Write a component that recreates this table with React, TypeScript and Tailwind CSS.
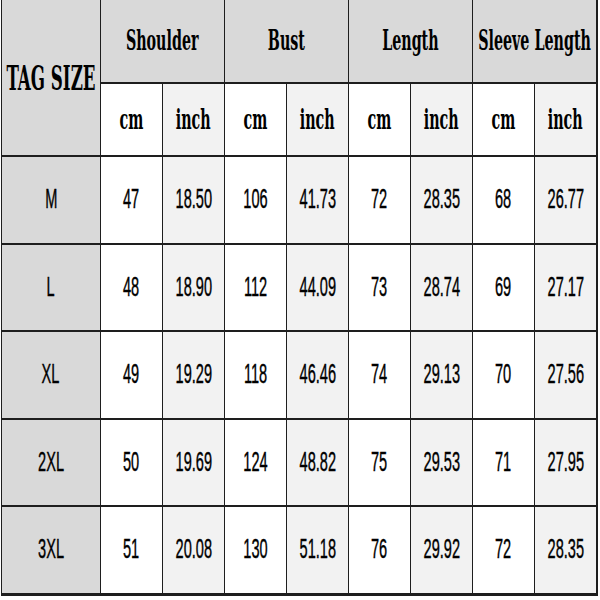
import React from "react";

type Row = { size: string; values: string[] };

const groups = ["Shoulder", "Bust", "Length", "Sleeve Length"];

const rows: Row[] = [
  { size: "M", values: ["47", "18.50", "106", "41.73", "72", "28.35", "68", "26.77"] },
  { size: "L", values: ["48", "18.90", "112", "44.09", "73", "28.74", "69", "27.17"] },
  { size: "XL", values: ["49", "19.29", "118", "46.46", "74", "29.13", "70", "27.56"] },
  { size: "2XL", values: ["50", "19.69", "124", "48.82", "75", "29.53", "71", "27.95"] },
  { size: "3XL", values: ["51", "20.08", "130", "51.18", "76", "29.92", "72", "28.35"] },
];

const headFont = "font-['DejaVu_Serif',serif] font-bold text-black";
const dataFont = "font-['Liberation_Sans',Arial,sans-serif] text-[27px] text-black [-webkit-text-stroke:0.4px_#000]";

function Head({ children, className = "" }: { children: React.ReactNode; className?: string }) {
  return (
    <div className={`flex items-center justify-center overflow-visible ${className}`}>
      <span className={`inline-block whitespace-nowrap text-[28px] leading-none scale-x-[0.51] ${headFont}`}>
        {children}
      </span>
    </div>
  );
}

function Cell({ children, className = "" }: { children: React.ReactNode; className?: string }) {
  return (
    <div className={`flex items-center justify-center ${className}`}>
      <span className={`inline-block whitespace-nowrap leading-none scale-x-[0.54] ${dataFont}`}>
        {children}
      </span>
    </div>
  );
}

export default function App() {
  return (
    <div className="w-[600px] h-[600px] bg-white overflow-hidden">
      <div className="ml-px inline-grid grid-cols-[98px_repeat(8,61px)] grid-rows-[82px_71px_repeat(5,85.5px)] gap-x-px gap-y-[2px] bg-[#1e1e1e] pl-px pr-[2px] pb-[3px]">
        <div className="row-span-2 flex items-center justify-center bg-[#d9d9d9]">
          <span className={`inline-block whitespace-nowrap text-[34px] leading-none scale-x-[0.49] ${headFont}`}>
            TAG SIZE
          </span>
        </div>
        {groups.map((g) => (
          <Head key={g} className="col-span-2 bg-[#d9d9d9]">
            {g}
          </Head>
        ))}
        {groups.map((g) => (
          <React.Fragment key={g + "-unit"}>
            <Head className="bg-white">cm</Head>
            <Head className="bg-[#f2f2f2]">inch</Head>
          </React.Fragment>
        ))}
        {rows.map((r) => (
          <React.Fragment key={r.size}>
            <Cell className="bg-[#d9d9d9]">{r.size}</Cell>
            {r.values.map((v, i) => (
              <Cell key={i} className={i % 2 === 0 ? "bg-white" : "bg-[#f2f2f2]"}>
                {v}
              </Cell>
            ))}
          </React.Fragment>
        ))}
      </div>
    </div>
  );
}
